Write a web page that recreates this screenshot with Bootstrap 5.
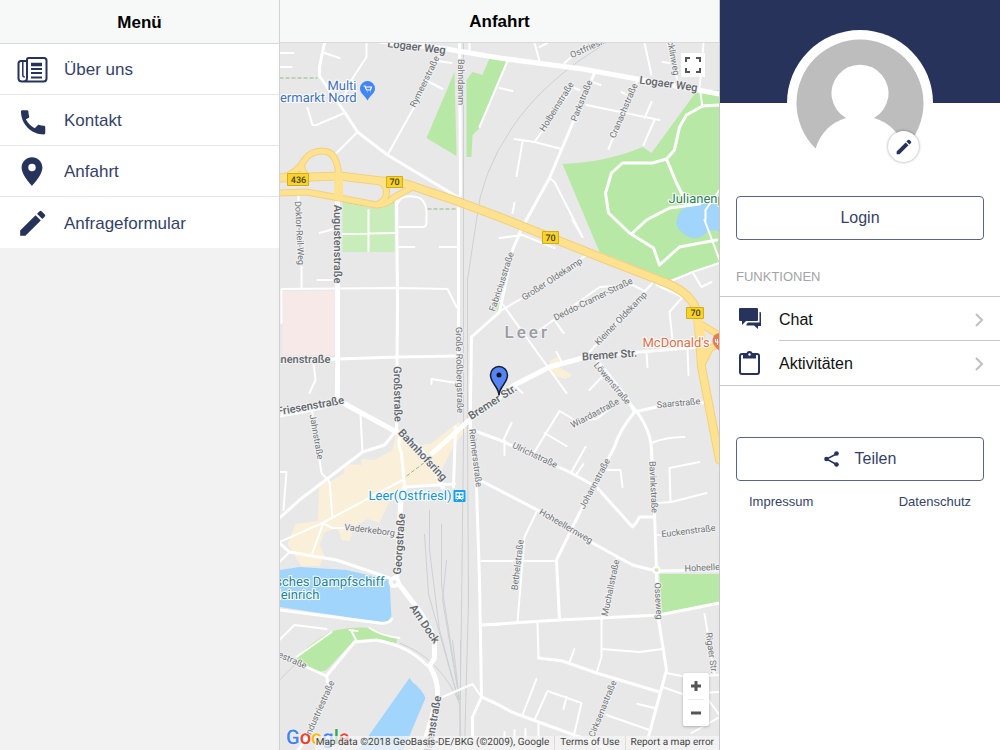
<!DOCTYPE html>
<html lang="de">
<head>
<meta charset="utf-8">
<meta name="viewport" content="width=device-width, initial-scale=1">
<title>Anfahrt</title>
<link rel="stylesheet" href="https://cdn.jsdelivr.net/npm/bootstrap@5.3.0/dist/css/bootstrap.min.css">
<style>
  :root { --navy: #27335a; --ink: #363f66; --line: #c8c7cc; }
  body { font-family: "Liberation Sans", Arial, sans-serif; font-size: 17px; color: #111; }
  .side { width: 28%; }
  .menu-side { background: #f2f2f2; border-right: 1px solid #d2d2d4; }
  .map-main { border-right: 1px solid var(--line); }
  .titlebar { height: 43px; padding-top: 3px; background: #f7f8f8; border-bottom: 1px solid #d9d9da; }
  .menu-side .titlebar { height: 44px; }
  .titlebar h1, .titlebar h2 { font-size: 17px; font-weight: 700; color: #000; }
  .menu-item { height: 51px; padding: 2px 16px 0; border: 0; border-bottom: 1px solid #e6e6e8; color: var(--ink); font-size: 17px; }
  .menu-item svg { width: 32px; height: 32px; flex: none; }
  svg.navy { fill: var(--navy); }

  .map-area { background: #e8e8e8; min-height: 0; text-rendering: geometricPrecision; }
  .map-canvas { inset: 0; width: 100%; height: 100%; font-family: Roboto, sans-serif; }
  .road path { fill: none; stroke: #fff; stroke-linejoin: round; stroke-linecap: round; }
  .r2 { stroke-width: 2; } .r3 { stroke-width: 3; } .r5 { stroke-width: 5; }
  .hw path { fill: none; stroke-linejoin: round; stroke-linecap: round; }
  .rail path { fill: none; stroke: #cfd0d4; stroke-width: 1; }
  .halo text { text-anchor: middle; dominant-baseline: central; fill: #707579; stroke: #f1f1f1; stroke-width: 2; paint-order: stroke; font-size: 9px; }
  .halo .big { font-size: 11px; font-weight: 500; fill: #5f656a; }
  .poi text { font-size: 13px; stroke: #fff; stroke-width: 2; paint-order: stroke; }
  .shield text { text-anchor: middle; font-size: 9px; font-weight: 500; fill: #4a3f10; }
  .map-btn { background: #fff; border: 0; color: #555; padding: 0; width: 26px; height: 26px; }
  .full-btn { top: 10px; right: 14px; width: 24px; height: 24px; }
  .zoom-box { right: 10px; bottom: 24px; background: #fff; border-radius: 2px; box-shadow: 0 1px 3px rgba(0,0,0,.25); }
  .zoom-box hr { margin: 0 5px; color: #bbb; }
  .attribution { right: 0; bottom: 0; height: 14px; font: 10px/14px Roboto, sans-serif; white-space: nowrap; }
  .attribution > * { background: rgba(245,245,245,.75); color: #444; text-decoration: none; padding: 0 5px; border-left: 1px solid #dcdcdc; }
  .attribution > :first-child { padding: 0 5px 0 1px; border: 0; }
  .google { left: 6px; bottom: 2px; font: 500 20px/22px Roboto, sans-serif; text-shadow: 0 0 2px #fff; }

  .cover { height: 103px; background: var(--navy); }
  .avatar { width: 146px; height: 146px; margin-top: -73px; border-radius: 50%; background: #fff; }
  .avatar > svg { width: 146px; height: 146px; }
  .edit-btn { right: 14px; bottom: 14px; width: 31px; height: 31px; padding: 0; border: 0; border-radius: 50%; background: #fff; box-shadow: 0 0 3px rgba(0,0,0,.4); }
  .outline-btn { height: 44px; border: 1px solid #5a6487; border-radius: 4px; background: #fff; color: var(--ink); font-size: 16px; }
  .login-btn { margin-top: 20px; }
  .section-label { font-size: 13px; line-height: 16px; color: #a3a3a6; margin: 29px 16px 11px; }
  .func-list { border-top: 1px solid var(--line); border-bottom: 1px solid var(--line); }
  .func-item { padding-left: 17px; color: #111; text-decoration: none; font-size: 16px; }
  .func-item svg { flex: none; }
  .func-text { height: 44px; margin-left: 16px; padding: 2px 15px 0 0; }
  .func-item:first-child .func-text { border-bottom: 1px solid var(--line); }
  .share-btn { margin-top: 51px; }
  .legal { font-size: 13px; line-height: 16px; margin: 13px 29px; }
  .legal a { color: var(--ink); text-decoration: none; }
</style>
</head>
<body>
<div class="d-flex vh-100 overflow-hidden">

  <nav class="side menu-side d-flex flex-column flex-shrink-0" aria-label="Menü">
    <header class="titlebar d-flex align-items-center justify-content-center"><h2 class="m-0">Menü</h2></header>
    <div class="list-group list-group-flush">
      <a href="#" class="list-group-item menu-item d-flex align-items-center gap-3">
        <svg viewBox="0 0 32 32" fill="none" stroke="#27335a" stroke-width="2"><path d="M12.500 4H28q2.500 0 2.500 2.500v18q0 3-3 3H6q-3.500 0-3.500-3.500V9.500Q2.500 7 5 7h5.500M12.500 4q-1.500 0-1.500 1.500V24q0 3.500-4 3.500"/><path d="M6.800 7v14q0 2 2 2" stroke-width="1.500"/><path d="M15 10.500h11" stroke-width="3.500"/><path d="M15 15h11M15 19h11M15 23.500h11" stroke-width="1.800"/></svg>
        <span>Über uns</span></a>
      <a href="#" class="list-group-item menu-item d-flex align-items-center gap-3">
        <svg class="navy" viewBox="-2 -2 28 28"><path d="M5.620 9.790c1.440 2.830 3.760 5.140 6.590 6.590l2.200-2.200c.27-.27.67-.36 1.020-.24 1.120.37 2.330.57 3.570.57.550 0 1 .45 1 1V20c0 .550-.45 1-1 1C9.610 21 2 13.390 2 4c0-.55.45-1 1-1h3.500c.55 0 1 .45 1 1 0 1.250.2 2.450.57 3.570.11.350.03.740-.25 1.020z" transform="translate(0 -1) scale(1.180)"/></svg>
        <span>Kontakt</span></a>
      <a href="#" class="list-group-item menu-item d-flex align-items-center gap-3">
        <svg class="navy" viewBox="0 0 24 24"><path d="M12 1C7.800 1 4.200 4.400 4.200 8.700 4.200 14.500 12 22.500 12 22.500s7.800-8 7.800-13.800C19.800 4.400 16.200 1 12 1zm0 10.500a2.800 2.800 0 1 1 0-5.600 2.800 2.800 0 0 1 0 5.600z"/></svg>
        <span>Anfahrt</span></a>
      <a href="#" class="list-group-item menu-item d-flex align-items-center gap-3">
        <svg class="navy" viewBox="0 1 23 23"><path d="M3 17.250V21h3.750L17.810 9.940l-3.750-3.750L3 17.250zM20.710 7.040a1 1 0 0 0 0-1.410l-2.340-2.340a1 1 0 0 0-1.410 0l-1.830 1.830 3.750 3.750 1.830-1.830z"/></svg>
        <span>Anfrageformular</span></a>
    </div>
  </nav>

  <main class="map-main d-flex flex-column flex-grow-1">
    <header class="titlebar d-flex align-items-center justify-content-center flex-shrink-0"><h1 class="m-0">Anfahrt</h1></header>
    <section class="map-area position-relative flex-grow-1 overflow-hidden" aria-label="Karte">
      <svg class="map-canvas position-absolute" viewBox="280 43 440 707" preserveAspectRatio="xMidYMid slice">
        <!-- parks, water, built-up areas -->
        <g fill="#b8e8a5">
          <path d="M455 72 427 138 457 156zM467 80l6-8 10 3 7-17 17 3-27 67-7 7-1 22h-5zM563 164q45-2 80-17l9 6 46-63h22v172l-50 18-70-28z"/>
          <path d="M660 574h60v28l-58 11zM297 658q15-16 33-26 20-6 42-4 12 7 26 10l-1 5q-22-4-42-3l-28 30q-6 3-12 1z"/>
          <path fill="#c9ecbb" d="M343 201l30 5 22-4v50h-52zM494 305l7-3v7l-6 3z"/>
        </g>
        <path fill="#f7e9e8" d="M283 291h53v64h-53z"/>
        <path fill="#faf0d9" d="M320 482l10 0 15-9 0-9 17 1 0-6 13 1 18-10 4-18 12 14 22-2 28-22 8 8-12 14-13 26-2 16-33 1-8 8-10 8-9 20-12-4-14 8-4 14-8-1-4-12-13 4-5 13 5 10-5 11h-18l-14-22 8-20 22-3zM550 361l8-4 3 11 12 7-7 4-14-4z"/>
        <path fill="#a2d5fc" d="M280 570l20-3 47 3 43 10 2 38q-4 5-12 4L280 607zM410 678l3 4q10 8 13 16l-22 52h-46l11-14zM677 225q0-14 10-18 10-6 33-2v27q-8-5-17 4-8 4-14 1-10-6-12-12z"/>
        <!-- railway -->
        <g class="rail"><path stroke-width="2" d="M464 43V440l-2 170-2 140M607 43Q545 80 513 127T477 220L468 280V430l1 170-4 150M430 510v40l10 80 19 70M442 524v60l18 116M425 534l4 60 31 110M447 560l-4 40 17 100M453 640l7 60M461 640v60M400 643q40 15 60 60l2 47M280 680l17-17"/></g>
        <g class="road">
          <path class="r2" d="M280 53h14M280 67h12M325 53l15 5M367 43v14l-15 23-7 15M308 108l5 17h4l28-12M358 132l-23 23M430 82l13 7M440 57l-27 53-25 45M508 61l-28 66M500 88l13 3M470 43v8M438 61l14 2"/>
          <path class="r3" d="M325 43l-5 24v9l25 36 13 20 30 23 70 42"/>
          <path class="r5" d="M380 41l67 8 53 9 83 11 137 25"/>
          <path class="r2" d="M535 43l5 18M540 47l8-4M565 63l7-6 28-14M645 43l7 32M668 43l10 37M663 62l7 1M704 43l-4 44 3 20M572 90l-37 52M515 139l20 3 27 7M523 142l-6 34M575 88l5 2M593 82l8 3M587 105l73 15M652 102l-7 16M655 120l-11 25M638 80l-29 69M622 92l6 3M550 178l5 4 28 55M515 203l-2 10"/>
          <path class="r3" d="M595 73l-15 34-30 71-27 49-10 23-13 62-28 25-1 63 0 27 6 60 3 93 2 117-9 20v20"/>
          <path class="r3" d="M720 105l-17 1-16 9-7 12-5 23-8 9-14 4h-30l-11 10-6 20 3 20 21 20 24 15 6 17 20-18 37-7M667 159l10 24 6 12M633 233l14-13 23-12 30-4"/>
          <path class="r2" d="M705 220l15 40M720 190l-14 20v10"/>
          <path class="r3" d="M460 43l1 150-2 10v206"/>
          <path class="r2" d="M299 193v12M302 267v21M282 323v-34M318 280h18M320 233l14-4M343 234l54-1M369 210v41M399 247h16M440 247h18M400 227h23q4 0 4-5v-12q-2-12-10-13-16-3-19 7M282 289l115-1 51 1 9 18M314 363l2 17-6 13M457 383l-25-4v5M500 238l23-3 32 13M573 220l10 17"/>
          <path class="r3" d="M397 200l1 100-1 130M280 361l117-4 60-1"/>
          <path class="r5" d="M338 198v202M280 415q40-6 60-14l57 31q30 15 46 55M433 453l37-33 30-23 15-12 35-18 33-9"/>
          <path class="r3" d="M583 358l57-6 60-5M280 518l20-18 63-48 22-7 10-12M402 433q-5 10 0 20l3 35M455 484l-50 3M454 487l2-60M280 543l10 9 47 8 53 18M280 610l100 13q10 1 12-4"/>
          <path class="r2" d="M312 408l10 65 8 9 3 36M361 415l2 37M280 472h7l-3 38M280 542l43-19 80-43M323 523l10 5h30q18 2 32 10M323 525l-10 28M280 562l10-10M499 312l24-14 64-43M500 300l67 93M540 330l17-12 43-31 33-2 12 6M555 320l9 13M590 352l63-69M657 285l26 12-13 15 3 28M720 263l-27 9-26 11M693 272l9 15 10-5M688 350l1 25M647 353l1 14M590 390l17-18M557 352l5 10M515 385l8 8"/>
          <path class="r5" d="M405 488q-4 8-4 20l-4 73 20 26q16 22 18 36v15l-5 8q9 14 8 31l-15 53"/>
          <path class="r3" d="M595 357l32 40 8 15M473 430l27 10 70 32 27 15 36 40q4-4 7-10h15M480 480l58 30 55 33 40 22 24 6 63-1M635 412q-15 18-20 35l-35 66-23 47 3 60M627 400q24 24 25 50l3 63 2 58 1 42 9 57-17 63-5 17M635 412l22-5 53-5"/>
          <path class="r2" d="M652 443q14-6 33-6M658 503l14-1 35-9M671 502l-1-34 30-6M657 535h8M535 452l25-41 17 10 20-2 21-16M545 433l22 13M512 423l-9 19M505 440v15M572 472l14-25M577 474l7-10M608 470h13l2 17M482 561h75M538 510l-13 27-7 85M618 557l-16 63M482 625h18"/>
          <path class="r3" d="M482 625l78-5 100-5 60-12M280 655l47 21 28-34 22-2q32 6 50 25M327 676l3 14-22 47-10 14M482 697q15 6 30 15l68 25 30 13M539 658l24 3 34 12 63 19"/>
          <path class="r2" d="M280 640l15-15 32 4M297 657l35-25M350 630l8 1M352 631l5 10M370 628q12 8 30 10M443 697l30-13 9 13M538 623l1 35M575 649l-5 13M602 620v37l-5 16M602 649l38 3 23-3M537 679l-14 36M535 720l13-29 34 12-7 30M567 697l-3 12M539 723v17M617 683l-24 54M607 715l43 15M638 704l17 4M667 673l20 4 33-2M663 687l20 7 37-2M505 732v10M515 730v12M526 729v13M692 733l28-16M715 674l-10-60M709 700l11 15"/>
          <circle cx="395" cy="582" r="6" fill="#fff"/><circle cx="395" cy="582" r="2" fill="#e8e8e8"/>
          <circle cx="657" cy="570" r="4" fill="#fff"/><circle cx="657" cy="570" r="2" fill="#c9ecbb"/>
        </g>
        <g fill="none" stroke="#8dbb83" stroke-dasharray="4 2"><path d="M280 78h38M428 209h30M407 476l24-18M343 201q30 9 52 1"/></g>
        <!-- federal road: casing, then fill -->
        <g class="hw" stroke="#f4cf7e">
          <path stroke-width="9" d="M280 178l60-2 67 8 50 17 43 16 50 20 50 20 67 26q24 10 30 27l3 27 2 30 18 93"/>
          <path stroke-width="7" d="M280 193l27-1 33 6 37 7q12-1 18-8l18-10M339 198v-25q-2-22-16-22-12 0-18 9-8 14-22 17M302 166q2 9 8 12M375 180q12 2 12 12 0 8-8 12M703 325l13 8 6 3M704 362l7-14 9-4"/>
        </g>
        <g class="hw" stroke="#fee28f">
          <path stroke-width="7" d="M280 178l60-2 67 8 50 17 43 16 50 20 50 20 67 26q24 10 30 27l3 27 2 30 18 93"/>
          <path stroke-width="5" d="M280 193l27-1 33 6 37 7q12-1 18-8l18-10M339 198v-25q-2-22-16-22-12 0-18 9-8 14-22 17M302 166q2 9 8 12M375 180q12 2 12 12 0 8-8 12M703 325l13 8 6 3M704 362l7-14 9-4"/>
          <path stroke-width="9" d="M339 176v20M698 318l3 18 2 20"/>
        </g>
        <g class="shield">
          <g fill="#f8d32e" stroke="#d3ad18"><path d="M288 173.500h21v12h-21zM387 176.500h16v11h-16zM543 231.500h16v12h-16zM687 307.500h17v11h-17z"/></g>
          <text x="299" y="183">436</text><text x="395" y="185">70</text><text x="551" y="241">70</text><text x="696" y="316">70</text>
        </g>
        <!-- street names -->
        <g class="halo">
          <text class="big" transform="translate(417 47) rotate(7)">Logaer Weg</text>
          <text class="big" transform="translate(669 84) rotate(8)">Logaer Weg</text>
          <text transform="translate(426 82) rotate(-64)">Rymeerstraße</text>
          <text transform="translate(460 82) rotate(90)">Bahndamm</text>
          <text transform="translate(588 49) rotate(-24)">Ostfriesl.</text>
          <text transform="translate(673 58) rotate(80)">cklinweg</text>
          <text transform="translate(558 107) rotate(-58)">Holbeinstraße</text>
          <text transform="translate(583 101) rotate(-68)">Parkstraße</text>
          <text transform="translate(625 111) rotate(-67)">Cranachstraße</text>
          <text transform="translate(299 233) rotate(87)">Doktor-Reil-Weg</text>
          <text class="big" transform="translate(338 244) rotate(90)">Augustenstraße</text>
          <text class="big" transform="translate(296 359)">Hannenstraße</text>
          <text class="big" transform="translate(311 406) rotate(-10)">Friesenstraße</text>
          <text transform="translate(316 437) rotate(80)">Jahnstraße</text>
          <text class="big" transform="translate(398 394) rotate(89)">Großstraße</text>
          <text transform="translate(459 370) rotate(89)">Große Roßbergstraße</text>
          <text transform="translate(503 282) rotate(-72)">Fabriciusstraße</text>
          <text transform="translate(553 280) rotate(-33)">Großer Oldekamp</text>
          <text transform="translate(594 300) rotate(-26)">Deddo-Cramer-Straße</text>
          <text transform="translate(622 319) rotate(-46)">Kleiner Oldekamp</text>
          <text class="big" transform="translate(610 355) rotate(-4)">Bremer Str.</text>
          <text class="big" transform="translate(493 402) rotate(-33)">Bremer Str.</text>
          <text transform="translate(612 384) rotate(50)">Löwenstraße</text>
          <text transform="translate(596 414) rotate(-28)">Wiardastraße</text>
          <text transform="translate(679 404) rotate(-5)">Saarstraße</text>
          <text transform="translate(535 456) rotate(25)">Ulrichstraße</text>
          <text transform="translate(596 484) rotate(-62)">Johannstraße</text>
          <text transform="translate(653 487) rotate(87)">Bavinkstraße</text>
          <text transform="translate(566 527) rotate(30)">Hoheellernweg</text>
          <text transform="translate(519 565) rotate(-83)">Bethelstraße</text>
          <text transform="translate(612 588) rotate(-78)">Muchallstraße</text>
          <text transform="translate(689 532) rotate(-7)">Euckenstraße</text>
          <text transform="translate(715 568) rotate(-3)">Hoheellernweg</text>
          <text transform="translate(658 601) rotate(87)">Osseweg</text>
          <text transform="translate(711 653) rotate(82)">Rigaer Str.</text>
          <text transform="translate(604 709) rotate(-68)">Cirksenastraße</text>
          <text transform="translate(475 458) rotate(83)">Reimersstraße</text>
          <text class="big" transform="translate(423 455) rotate(47)">Bahnhofsring</text>
          <text transform="translate(370 531) rotate(7)">Vaderkeborg</text>
          <text class="big" transform="translate(400 544) rotate(-86)">Georgstraße</text>
          <text class="big" transform="translate(425 624) rotate(56)">Am Dock</text>
          <text class="big" transform="translate(433 726) rotate(-80)">Hafenstraße</text>
          <text transform="translate(288 659) rotate(24)">Seestraße</text>
          <text transform="translate(321 709) rotate(-66)">Industriestraße</text>
        </g>
        <text x="505" y="338" font-size="17" font-weight="500" letter-spacing="3" fill="#999da5" stroke="#f3f3f3" stroke-width="2" paint-order="stroke">Leer</text>
        <g class="poi">
          <g fill="#4170b8" text-anchor="end"><text x="357" y="90">Multi</text><text x="357" y="102">Supermarkt Nord</text></g>
          <text x="369" y="500" fill="#1593d2">Leer(Ostfriesl)</text>
          <g fill="#17839a"><text x="385" y="586" text-anchor="end">Historisches Dampfschiff</text><text x="320" y="599" text-anchor="end">Heinrich</text></g>
          <text x="669" y="203" fill="#2f7d57">Julianenpark</text>
          <text x="643" y="347" fill="#d9704c">McDonald's</text>
        </g>
        <path fill="#4285f4" d="M368 81a7.500 7.500 0 0 1 7.500 7.500c0 5-5 7-7.500 12-2.500-5-7.500-7-7.500-12A7.500 7.500 0 0 1 368 81z"/>
        <path d="M364 86h1.500l1.500 4h4l1-3h-6M367.500 92h.5M371 92h.5" fill="none" stroke="#fff" stroke-width="1.200"/>
        <path fill="#ee7a54" d="M720 333q-7 1-7 8 0 4 7 10z"/><path d="M716 339v3h3M718 339v6" stroke="#fff" fill="none"/>
        <rect x="454" y="490" width="12" height="12" rx="1" fill="#17a3ec"/><path fill="#fff" d="M456 492h8v7h-8z"/><path fill="#17a3ec" d="M457 493.500h2.500v2H457zM460.500 493.500h2.500v2h-2.500zM457 497h1.500v1H457zM461.500 497h1.500v1h-1.500z"/><path stroke="#fff" d="M457 500.500l1-1M463 500.500l-1-1"/>
        <path fill="#5585f5" stroke="#151c33" stroke-width="1.500" d="M499.500 395.500c0-9-8.500-12-8.500-20.500a8.500 8.500 0 0 1 17 0c0 8.500-8.500 11.500-8.500 20.500z"/><circle cx="499.500" cy="375" r="2.500" fill="#0b1020"/>
      </svg>
      <button type="button" class="map-btn full-btn position-absolute d-flex align-items-center justify-content-center" aria-label="Vollbild"><svg width="16" height="16" fill="none" stroke="#555" stroke-width="2"><path d="M1 5V1h4M11 1h4v4M15 11v4h-4M5 15H1v-4"/></svg></button>
      <div class="zoom-box position-absolute">
        <button type="button" class="map-btn d-flex align-items-center justify-content-center rounded" aria-label="Vergrößern"><svg width="12" height="12" stroke="#555" stroke-width="3"><path d="M1 6h10M6 1v10"/></svg></button>
        <hr>
        <button type="button" class="map-btn d-flex align-items-center justify-content-center rounded" aria-label="Verkleinern"><svg width="12" height="12" stroke="#555" stroke-width="3"><path d="M1 6h10"/></svg></button>
      </div>
      <div class="google position-absolute"><span style="color:#4285f4">G</span><span style="color:#ea4335">o</span><span style="color:#fbbc05">o</span><span style="color:#4285f4">g</span><span style="color:#34a853">l</span><span style="color:#ea4335">e</span></div>
      <div class="attribution position-absolute d-flex"><span>Map data ©2018 GeoBasis-DE/BKG (©2009), Google</span><a href="#">Terms of Use</a><a href="#">Report a map error</a></div>
    </section>
  </main>

  <aside class="side flex-shrink-0 bg-white">
    <div class="cover"></div>
    <div class="avatar position-relative mx-auto">
      <svg viewBox="0 0 146 146"><path fill="#bdbdbd" d="M28.600 118.500A63.500 63.500 0 1 1 117.400 118.500Q110 95 87 88A28.500 28.500 0 1 0 59 88Q36 95 28.600 118.500z"/></svg>
      <button type="button" class="edit-btn position-absolute d-flex align-items-center justify-content-center" aria-label="Profil bearbeiten"><svg class="navy" width="18" height="18" viewBox="1 1 22 22"><path d="M3 17.500V21h3.500L17.500 10 14 6.500zM20.500 7.200a1.500 1.500 0 0 0 0-2l-1.700-1.700a1.500 1.500 0 0 0-2 0L15 5.300 18.700 9z"/></svg></button>
    </div>
    <div class="d-grid px-3"><button type="button" class="btn outline-btn login-btn">Login</button></div>
    <h2 class="section-label">FUNKTIONEN</h2>
    <div class="func-list">
      <a href="#" class="func-item d-flex align-items-center">
        <svg class="navy" width="26" height="26" viewBox="0 0 26 26"><path d="M3 2h17q1 0 1 1v11q0 1-1 1H9l-4 4v-4H3q-1 0-1-1V3q0-1 1-1z"/><path d="M22.500 6h.5q1 0 1 1v13h-3v3l-4-3.500H9.500V18l1.500-1.500h11.500z"/></svg>
        <span class="func-text d-flex flex-grow-1 align-items-center justify-content-between">Chat <svg width="12" height="16" fill="none" stroke="#bfbfc4" stroke-width="2"><path d="M3 2l6 6-6 6"/></svg></span></a>
      <a href="#" class="func-item d-flex align-items-center">
        <svg width="26" height="26" viewBox="0 0 26 26"><rect x="3" y="4" width="19" height="20" rx="2" fill="none" stroke="#27335a" stroke-width="2"/><path fill="#27335a" d="M6 4h3.500a3 3 0 0 1 6 0H19v4.500H6z"/><circle cx="12.500" cy="4.500" r="1.200" fill="#fff"/></svg>
        <span class="func-text d-flex flex-grow-1 align-items-center justify-content-between">Aktivitäten <svg width="12" height="16" fill="none" stroke="#bfbfc4" stroke-width="2"><path d="M3 2l6 6-6 6"/></svg></span></a>
    </div>
    <div class="d-grid px-3"><button type="button" class="btn outline-btn share-btn d-flex align-items-center justify-content-center gap-3">
      <svg class="navy" width="15" height="16" viewBox="0 0 15 16"><path d="M12.500 3L2.500 8l10 5.500" fill="none" stroke="#27335a" stroke-width="1.500"/><circle cx="12.500" cy="2.500" r="2.300"/><circle cx="2.500" cy="8" r="2.300"/><circle cx="12.500" cy="13.500" r="2.300"/></svg>Teilen</button></div>
    <div class="legal d-flex justify-content-between"><a href="#">Impressum</a><a href="#">Datenschutz</a></div>
  </aside>
</div>
<script src="https://cdn.jsdelivr.net/npm/bootstrap@5.3.0/dist/js/bootstrap.bundle.min.js"></script>
</body>
</html>
